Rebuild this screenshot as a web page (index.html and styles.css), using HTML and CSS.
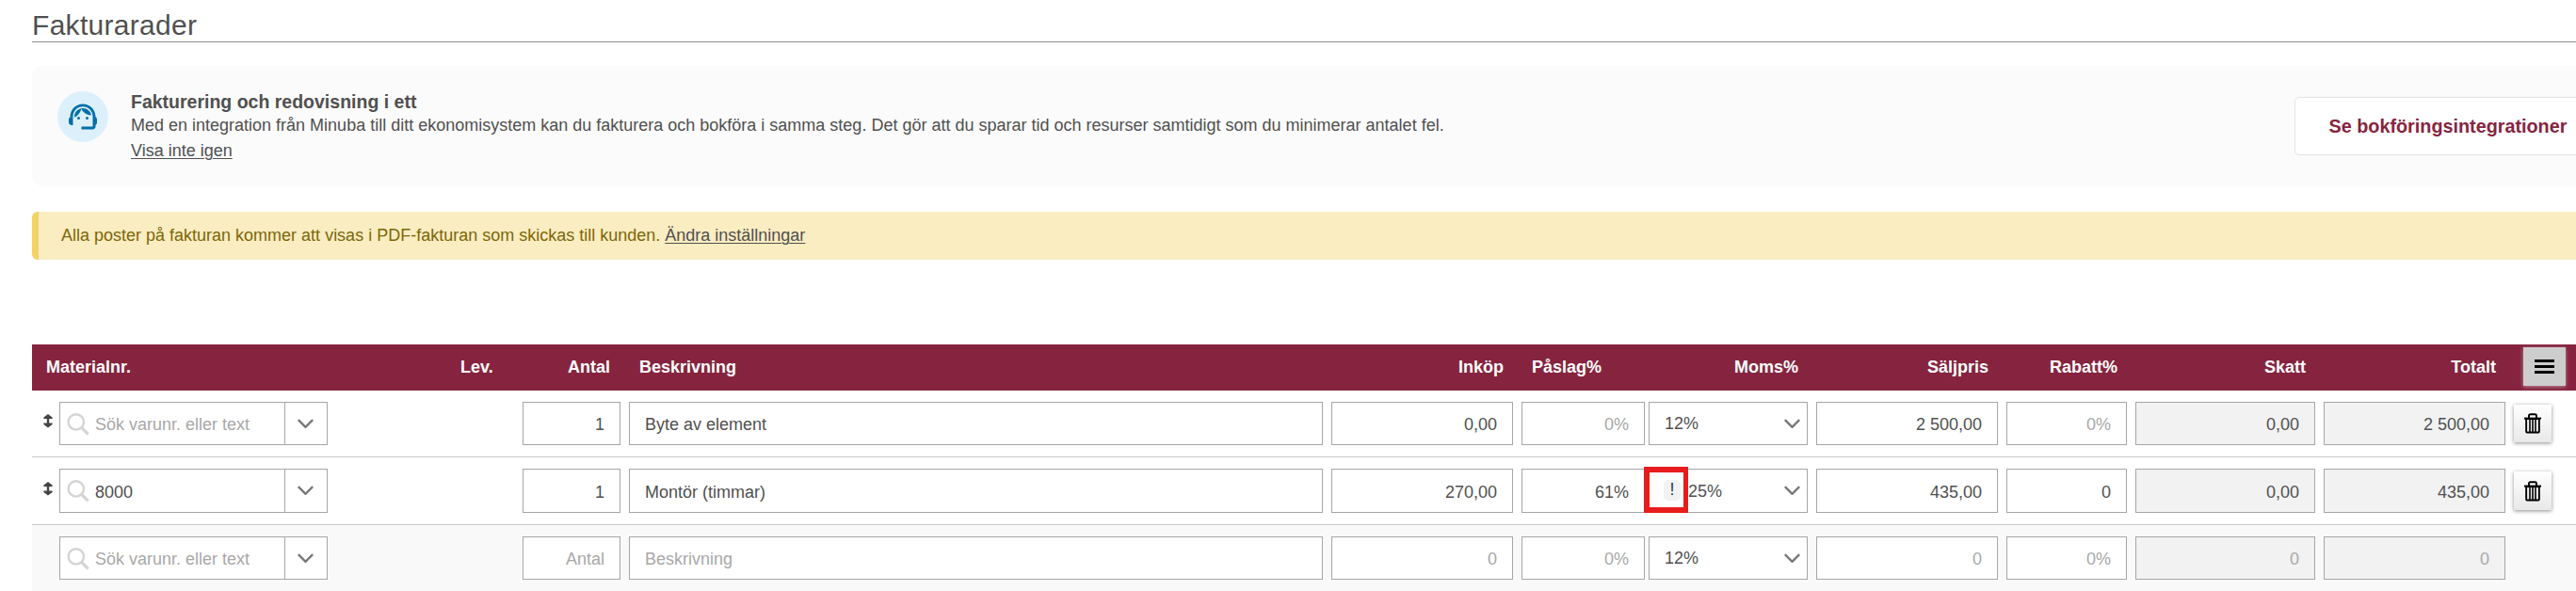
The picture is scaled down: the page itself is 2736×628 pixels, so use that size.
FILE: index.html
```html
<!DOCTYPE html>
<html lang="sv">
<head>
<meta charset="utf-8">
<title>Fakturarader</title>
<link rel="stylesheet" href="styles.css">
</head>
<body>
<svg class="defs" width="0" height="0" aria-hidden="true">
  <symbol id="chevron" viewBox="0 0 17 10"><path d="M0.8 1.2 8.5 8.8 16.2 1.2" fill="none" stroke="#777" stroke-width="2.4"/></symbol>
  <symbol id="search" viewBox="0 0 24 24"><circle cx="9.8" cy="9.4" r="8.2" fill="none" stroke="#d4d4d4" stroke-width="2.4"/><path d="M15.4 15.2 22.6 22.4" stroke="#d4d4d4" stroke-width="3.2"/></symbol>
  <symbol id="drag" viewBox="0 0 10 15"><path d="M5 0 9.6 3.6V5H6.2V9.6H9.6V11L5 14.6 .4 11V9.6H3.8V5H.4V3.6Z" fill="#444"/></symbol>
  <symbol id="trash" viewBox="0 0 18 22"><path d="M5 5V2.8Q5 1.3 6.5 1.3H11.5Q13 1.3 13 2.8V5" fill="none" stroke="#000" stroke-width="1.9"/><path d="M0 4.6H18V6.6H0Z"/><path d="M1.2 6H16.8V19.6Q16.8 21.5 15 21.5H3Q1.2 21.5 1.2 19.6ZM3.1 7V19.5H5.2V7ZM6.8 7V19.5H8.2V7ZM9.8 7V19.5H11.2V7ZM12.8 7V19.5H14.9V7Z" fill-rule="evenodd"/></symbol>
</svg>
<main class="page">
  <h1 class="title">Fakturarader</h1>

  <section class="promo">
    <div class="promo-icon">
      <svg width="36" height="36" viewBox="0 0 24 24" fill="#0070a8"><path d="M21 12.22C21 6.73 16.74 3 12 3c-4.69 0-9 3.65-9 9.28-.6.34-1 .98-1 1.72v2c0 1.1.9 2 2 2h1v-6.1c0-3.87 3.13-7 7-7s7 3.13 7 7V19h-8v2h8c1.1 0 2-.9 2-2v-1.22c.59-.31 1-.92 1-1.64v-2.3c0-.7-.41-1.31-1-1.62z"/><circle cx="9" cy="13" r="1"/><circle cx="15" cy="13" r="1"/><path d="M18 11.03C17.52 8.18 15.04 6 12.05 6c-3.03 0-6.29 2.51-6.03 6.45 2.47-1.01 4.33-3.21 4.86-5.89 1.31 2.63 4 4.44 7.12 4.47z"/></svg>
    </div>
    <div class="promo-text">
      <h2 class="promo-title">Fakturering och redovisning i ett</h2>
      <p class="promo-desc">Med en integration från Minuba till ditt ekonomisystem kan du fakturera och bokföra i samma steg. Det gör att du sparar tid och resurser samtidigt som du minimerar antalet fel.</p>
      <a class="link promo-hide">Visa inte igen</a>
    </div>
    <button class="promo-button">Se bokföringsintegrationer</button>
  </section>

  <div class="notice"><span class="notice-text">Alla poster på fakturan kommer att visas i PDF-fakturan som skickas till kunden. <a class="link">Ändra inställningar</a></span></div>

  <section class="lines">
    <div class="line head">
      <span class="h-material">Materialnr.</span>
      <span class="h-lev">Lev.</span>
      <span class="right h-qty">Antal</span>
      <span class="h-left">Beskrivning</span>
      <span class="right">Inköp</span>
      <span class="h-left">Påslag%</span>
      <span class="right">Moms%</span>
      <span class="right">Säljpris</span>
      <span class="right">Rabatt%</span>
      <span class="right">Skatt</span>
      <span class="right">Totalt</span>
      <span class="menu"><i></i><i></i><i></i></span>
    </div>

    <div class="line row">
      <svg class="drag" width="10" height="15"><use href="#drag"/></svg>
      <div class="search"><svg class="glass" width="24" height="24"><use href="#search"/></svg><span class="query hint">Sök varunr. eller text</span><span class="drop"><svg width="17" height="10"><use href="#chevron"/></svg></span></div>
      <span></span>
      <div class="field num">1</div>
      <div class="field">Byte av element</div>
      <div class="field num">0,00</div>
      <div class="field num markup hint">0%</div>
      <div class="field vat"><span>12%</span><svg width="17" height="10"><use href="#chevron"/></svg></div>
      <div class="field num">2 500,00</div>
      <div class="field num hint">0%</div>
      <div class="field num locked">0,00</div>
      <div class="field num locked">2 500,00</div>
      <button class="delete"><svg width="18" height="22"><use href="#trash"/></svg></button>
    </div>

    <div class="line row tall">
      <svg class="drag" width="10" height="15"><use href="#drag"/></svg>
      <div class="search"><svg class="glass" width="24" height="24"><use href="#search"/></svg><span class="query">8000</span><span class="drop"><svg width="17" height="10"><use href="#chevron"/></svg></span></div>
      <span></span>
      <div class="field num">1</div>
      <div class="field">Montör (timmar)</div>
      <div class="field num">270,00</div>
      <div class="field num markup">61%</div>
      <div class="field vat"><span class="alert">!</span><span>25%</span><svg width="17" height="10"><use href="#chevron"/></svg><div class="highlight"></div></div>
      <div class="field num">435,00</div>
      <div class="field num">0</div>
      <div class="field num locked">0,00</div>
      <div class="field num locked">435,00</div>
      <button class="delete"><svg width="18" height="22"><use href="#trash"/></svg></button>
    </div>

    <div class="line row new">
      <span></span>
      <div class="search"><svg class="glass" width="24" height="24"><use href="#search"/></svg><span class="query hint">Sök varunr. eller text</span><span class="drop"><svg width="17" height="10"><use href="#chevron"/></svg></span></div>
      <span></span>
      <div class="field num hint">Antal</div>
      <div class="field hint">Beskrivning</div>
      <div class="field num hint">0</div>
      <div class="field num markup hint">0%</div>
      <div class="field vat"><span>12%</span><svg width="17" height="10"><use href="#chevron"/></svg></div>
      <div class="field num hint">0</div>
      <div class="field num hint">0%</div>
      <div class="field num locked hint">0</div>
      <div class="field num locked hint">0</div>
    </div>
  </section>
</main>
</body>
</html>
```
FILE: styles.css
```css
* { box-sizing: border-box; }
html, body { margin: 0; height: 628px; overflow: hidden; background: #fff; }
body { font: 18px/20px "Liberation Sans", Arial, sans-serif; color: #505050; }
.defs { display: block; }
.page { width: 2736px; height: 628px; padding-left: 34px; overflow: hidden; }
svg { display: block; flex: none; }
.link { color: #505050; text-decoration: underline; text-underline-offset: 2px; text-decoration-thickness: 1px; }

.title { margin: 0; height: 45px; padding-top: 10px; font-size: 30px; line-height: 34px; font-weight: 400; letter-spacing: 0.3px; border-bottom: 1px solid #8f8f8f; }

.promo { display: flex; width: 2757px; height: 128px; margin-top: 25px; padding: 27px 27px 0; border-radius: 12px; background: #fbfbfb; }
.promo-icon { display: flex; flex: none; align-items: center; justify-content: center; width: 54px; height: 54px; border-radius: 50%; background: #dcf0fc; }
.promo-text { flex: 1; margin-left: 24px; white-space: nowrap; }
.promo-title { margin: 0; font-size: 19.5px; line-height: 22px; font-weight: 700; }
.promo-desc { margin: 4px 0 7px; }
.promo-hide { display: inline-block; }
.promo-button { flex: none; width: 327px; height: 62px; margin-top: 6px; padding: 0 1px 0 0; border: 1px solid #e3e3e3; border-radius: 5px; background: #fff; color: #862440; font: 700 19.8px/22px "Liberation Sans", Arial, sans-serif; }

.notice { width: 2757px; height: 51px; margin-top: 27px; padding: 15px 0 0 24px; border-left: 7px solid #f1d468; border-radius: 6px; background: #f9edc1; color: #7d6608; white-space: nowrap; }

.lines { margin-top: 90px; }
.line { display: grid; grid-template-columns: 29px 285px 207px 113px 746px 202px 135px 178px 202px 137px 200px 202px 66px; }
.head { height: 49px; padding-top: 14px; background: #862440; color: #fff; font-weight: 700; }
.h-material { grid-column: 1 / 3; padding-left: 15px; }
.h-lev { padding-left: 141px; }
.h-left { padding-left: 11px; }
.right { padding-right: 19px; text-align: right; }
.h-qty { padding-right: 20px; }
.menu { display: flex; flex-direction: column; align-items: center; gap: 3px; width: 45px; height: 41px; margin: -11px 0 0 10px; padding-top: 13px; background: #cdcdcd; box-shadow: 0 1px 4px rgba(255, 255, 255, 0.45); }
.menu i { width: 21px; height: 3px; background: #000; }

.row { height: 71px; padding-top: 12px; border-bottom: 1px solid #c8c8c8; --h: 46px; --pad: 13px; }
.tall { height: 72px; --h: 47px; --pad: 14px; }
.new { height: 72px; background: #f9f9f9; }
.drag { margin: 12.5px 0 0 12px; }
.tall .drag { margin-top: 13.5px; }
.field, .search { height: var(--h); border: 1px solid #a6a6a6; background: #fff; }
.field { margin-right: 9px; padding: var(--pad) 16px 0; white-space: nowrap; }
.num { text-align: right; }
.markup { margin-right: 4px; }
.locked { background: #f2f2f2; }
.hint { color: #a8a8a8; }
.search { display: flex; padding-left: 7px; }
.glass { margin-top: 11px; }
.query { flex: 1; padding: var(--pad) 0 0 6px; }
.drop { width: 45px; padding: 17px 0 0 13px; border-left: 1px solid #a6a6a6; }
.vat { position: relative; display: flex; padding-top: calc(var(--pad) - 1px); padding-right: 7px; }
.vat > svg { margin: 5px 0 0 auto; }
.tall .vat > svg { margin-top: 4px; }
.alert { width: 18px; height: 22px; margin: -2px 8px 0 -1px; border-radius: 5px; background: #f2f2f2; color: #333; text-align: center; }
.highlight { position: absolute; left: -6px; top: -3px; width: 47px; height: 49px; border: 6px solid #e81c1c; border-right-width: 5px; }
.delete { display: flex; align-items: center; justify-content: center; width: 40px; height: 40px; margin: 3px 0 0; padding: 0; border: 0; background: linear-gradient(#fff, #e8e8e8); box-shadow: 0 1px 4px rgba(0, 0, 0, 0.45); }
.tall .delete { height: 41px; }
```
